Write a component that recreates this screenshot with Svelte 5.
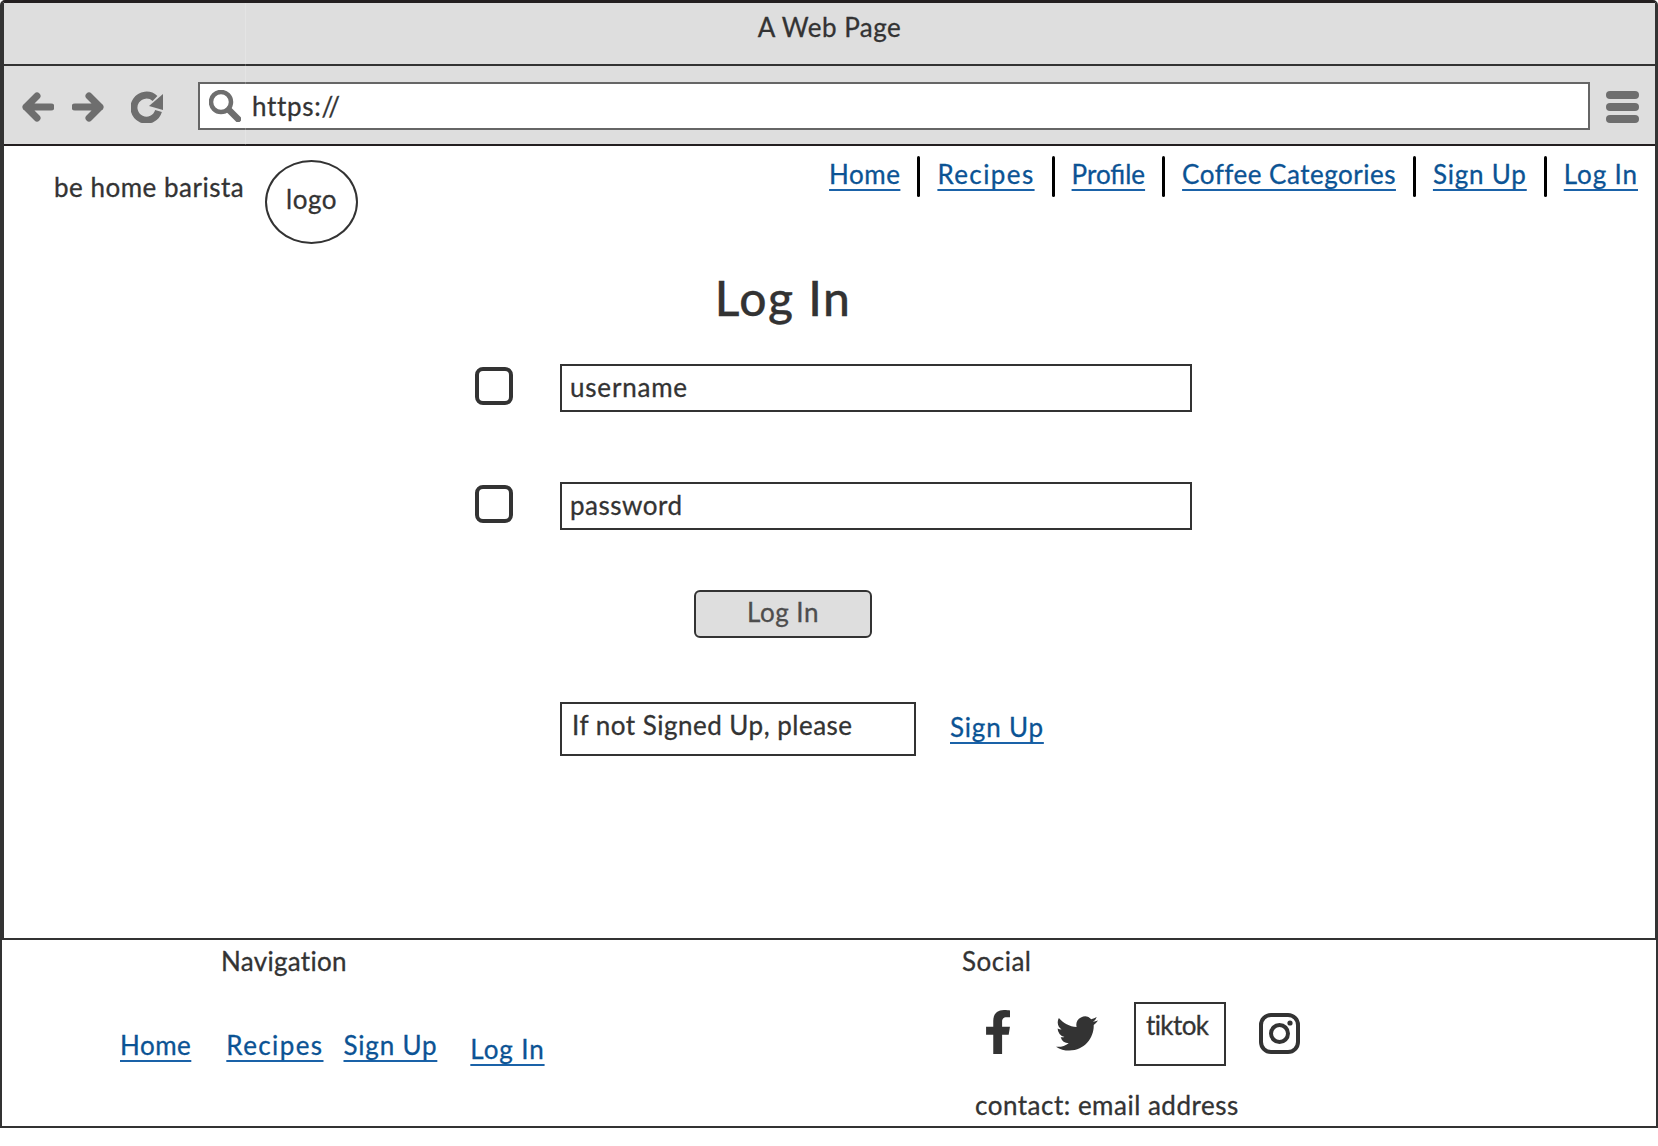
<script>
  const topLinks = [
    { label: 'Home', cls: '' },
    { label: 'Recipes', cls: 'wide' },
    { label: 'Profile', cls: 'tight' },
    { label: 'Coffee Categories', cls: '' },
    { label: 'Sign Up', cls: 'su' },
    { label: 'Log In', cls: 'li' }
  ];
</script>

<div class="page">
  <div class="browser">
    <div class="titlebar">A Web Page</div>
    <div class="toolbar">
      <svg class="tool" viewBox="0 0 32 32" aria-hidden="true"><path d="M29 16H4M15 5 4 16l11 11" /></svg>
      <svg class="tool forward" viewBox="0 0 32 32" aria-hidden="true"><path d="M3 16h25M17 5l11 11-11 11" /></svg>
      <svg class="tool reload" viewBox="0 0 32 32" aria-hidden="true">
        <path d="M24 7.5A12.5 12.5 0 1 0 27.5 20" />
        <polygon class="solid" points="32,3 32,19 18,15" />
      </svg>
      <div class="url">
        <svg class="search" viewBox="0 0 32 32" aria-hidden="true">
          <circle cx="12" cy="12" r="10" />
          <path class="handle" d="M20 20 29 29" />
        </svg>
        <span>https://</span>
      </div>
      <div class="menu"><i></i><i></i><i></i></div>
    </div>

    <div class="content">
      <header>
        <div class="brand">be home barista</div>
        <div class="logo">logo</div>
        <nav>
          {#each topLinks as l, i}
            {#if i > 0}<span class="sep"></span>{/if}
            <a class={l.cls} href="#top">{l.label}</a>
          {/each}
        </nav>
      </header>

      <div class="stage">
        <h1>Log In</h1>
        <div class="row first">
          <span class="check"></span>
          <div class="field user">username</div>
        </div>
        <div class="row second">
          <span class="check"></span>
          <div class="field">password</div>
        </div>
        <button type="button">Log In</button>
        <div class="signup">
          <div class="note">If not Signed Up, please</div>
          <a class="su" href="#top">Sign Up</a>
        </div>
      </div>
    </div>
    <div class="hairline"></div>
  </div>

  <footer>
    <section class="left">
      <div class="fhead nav-head">Navigation</div>
      <div class="flinks">
        <a href="#top">Home</a>
        <a class="recipes wide" href="#top">Recipes</a>
        <a class="signup-link su" href="#top">Sign Up</a>
        <a class="login-link li" href="#top">Log In</a>
      </div>
    </section>
    <section class="right">
      <div class="fhead">Social</div>
      <div class="socials">
        <svg class="fb" viewBox="22 0 272 512" preserveAspectRatio="none" aria-hidden="true">
          <path d="M279.14 288l14.22-92.66h-88.91v-60.13c0-25.35 12.42-50.06 52.24-50.06h40.42V6.26S260.43 0 225.36 0c-73.22 0-121.08 44.38-121.08 124.72v70.62H22.89V288h81.39v224h100.17V288z" />
        </svg>
        <svg class="tw" viewBox="0 2 24 20" preserveAspectRatio="none" aria-hidden="true">
          <path d="M23.953 4.57a10 10 0 01-2.825.775 4.958 4.958 0 002.163-2.723c-.951.555-2.005.959-3.127 1.184a4.92 4.92 0 00-8.384 4.482C7.69 8.095 4.067 6.13 1.64 3.162a4.822 4.822 0 00-.666 2.475c0 1.71.87 3.213 2.188 4.096a4.904 4.904 0 01-2.228-.616v.06a4.923 4.923 0 003.946 4.827 4.996 4.996 0 01-2.212.085 4.936 4.936 0 004.604 3.417 9.867 9.867 0 01-6.102 2.105c-.39 0-.779-.023-1.17-.067a13.995 13.995 0 007.557 2.209c9.053 0 13.998-7.496 13.998-13.985 0-.21 0-.42-.015-.63A9.935 9.935 0 0024 4.59z" />
        </svg>
        <div class="tiktok">tiktok</div>
        <svg class="ig" viewBox="0 0 41 41" aria-hidden="true">
          <rect x="2" y="2" width="37" height="37" rx="10" />
          <circle cx="20.5" cy="20.5" r="8.5" />
          <circle class="dot" cx="31" cy="10" r="2.6" />
        </svg>
      </div>
      <div class="contact">contact: email address</div>
    </section>
  </footer>
</div>

<style>
  :global(body) {
    margin: 0;
    background: #fff;
  }
  .page {
    width: 1658px;
    height: 1146px;
    font-family: Lato, "Open Sans", sans-serif;
    font-size: 26px;
    line-height: 30px;
    letter-spacing: 0.5px;
    -webkit-text-stroke: 0.3px currentColor;
    color: #333;
  }
  a {
    color: #0b5394;
    text-decoration: underline;
    text-decoration-color: #1a62a8;
    text-decoration-thickness: 2px;
    text-underline-offset: 5px;
    white-space: nowrap;
  }
  .wide {
    letter-spacing: 1.4px;
  }
  .tight {
    letter-spacing: 0;
  }
  .su {
    letter-spacing: 0.8px;
  }
  .li {
    letter-spacing: 0.9px;
  }
  .browser {
    position: relative;
    box-sizing: border-box;
    height: 938px;
    border: 3px solid #333;
    border-left-width: 4px;
    border-top-color: #231f20;
    border-bottom: 0;
    border-radius: 5px 5px 0 0;
    background: #fff;
  }
  .hairline {
    position: absolute;
    left: 241px;
    top: 0;
    width: 1px;
    height: 142px;
    background: rgba(255, 255, 255, 0.2);
  }
  .titlebar {
    box-sizing: border-box;
    height: 63px;
    padding-top: 9px;
    background: #dedede;
    border-bottom: 2px solid #333;
    text-align: center;
  }
  .toolbar {
    box-sizing: border-box;
    height: 80px;
    display: flex;
    align-items: flex-start;
    padding: 16px 14px 0 18px;
    background: #dedede;
    border-bottom: 2px solid #231f20;
  }
  .tool {
    width: 32px;
    height: 32px;
    margin-top: 9px;
    flex: none;
    fill: none;
    stroke: #6e6e6e;
    stroke-width: 7;
    stroke-linecap: round;
    stroke-linejoin: round;
  }
  .forward {
    margin-left: 18px;
  }
  .reload {
    margin-left: 27px;
    stroke-linecap: butt;
  }
  .solid {
    fill: #6e6e6e;
    stroke: none;
  }
  .url {
    box-sizing: border-box;
    width: 1392px;
    height: 48px;
    margin-left: 35px;
    display: flex;
    align-items: center;
    background: #fff;
    border: 2px solid #666;
  }
  .search {
    width: 32px;
    height: 32px;
    margin-left: 9px;
    flex: none;
    fill: none;
    stroke: #6e6e6e;
    stroke-width: 4.5;
  }
  .handle {
    stroke-width: 6.5;
    stroke-linecap: round;
  }
  .url span {
    margin-left: 11px;
    letter-spacing: 0.7px;
  }
  .menu {
    margin-left: 16px;
    margin-top: 9px;
    display: flex;
    flex-direction: column;
    gap: 4px;
  }
  .menu i {
    display: block;
    width: 33px;
    height: 8px;
    border-radius: 4px;
    background: #6e6e6e;
  }
  header {
    display: flex;
    align-items: flex-start;
    height: 97px;
    padding: 14px 17px 0 50px;
    box-sizing: border-box;
  }
  .brand {
    margin-top: 12px;
    width: 211px;
    white-space: nowrap;
  }
  .logo {
    box-sizing: border-box;
    width: 93px;
    height: 84px;
    border: 2px solid #333;
    border-radius: 50%;
    display: flex;
    align-items: center;
    justify-content: center;
    padding-bottom: 6px;
  }
  nav {
    margin-left: auto;
    margin-top: -4px;
    display: flex;
    align-items: flex-start;
    gap: 17px;
  }
  nav a {
    margin-top: 3px;
  }
  .sep {
    width: 3px;
    height: 41px;
    border-radius: 2px;
    background: #000;
  }
  .stage {
    margin-left: 471px;
    width: 717px;
  }
  h1 {
    margin: 27px 0 0;
    width: 616px;
    text-align: center;
    font-size: 48px;
    line-height: 56px;
    font-weight: 500;
    letter-spacing: 1.5px;
  }
  .row {
    display: flex;
    align-items: flex-start;
    gap: 47px;
  }
  .first {
    margin-top: 38px;
  }
  .second {
    margin-top: 70px;
  }
  .check {
    box-sizing: border-box;
    flex: none;
    width: 38px;
    height: 38px;
    margin-top: 3px;
    border: 4px solid #333;
    border-radius: 8px;
  }
  .field {
    box-sizing: border-box;
    flex: 1;
    height: 48px;
    padding: 6px 8px;
    border: 2px solid #333;
  }
  .user {
    letter-spacing: 0.8px;
  }
  button {
    display: block;
    box-sizing: border-box;
    width: 178px;
    height: 48px;
    margin: 60px 0 0 219px;
    padding: 0 0 5px;
    background: #dedede;
    border: 2px solid #333;
    border-radius: 6px;
    color: #4d4d4d;
    font: inherit;
    letter-spacing: inherit;
  }
  .signup {
    margin: 64px 0 0 85px;
    display: flex;
    align-items: flex-start;
    gap: 34px;
  }
  .note {
    box-sizing: border-box;
    width: 356px;
    height: 54px;
    padding: 6px 10px;
    border: 2px solid #333;
  }
  .signup a {
    margin-top: 10px;
  }
  footer {
    box-sizing: border-box;
    height: 190px;
    display: flex;
    border: 2px solid #333;
    background: #fff;
  }
  .left {
    width: 960px;
    flex: none;
  }
  .fhead {
    margin-top: 6px;
  }
  .nav-head {
    margin-left: 219px;
    letter-spacing: 0.3px;
  }
  .flinks {
    display: flex;
    align-items: flex-start;
    margin: 54px 0 0 118px;
  }
  .recipes {
    margin-left: 35px;
  }
  .signup-link {
    margin-left: 20px;
  }
  .login-link {
    margin-left: 33px;
    margin-top: 4px;
  }
  .socials {
    display: flex;
    align-items: flex-start;
    height: 64px;
    margin-top: 26px;
  }
  .fb {
    width: 24px;
    height: 44px;
    margin: 8px 0 0 24px;
    fill: #333;
  }
  .tw {
    width: 42px;
    height: 35px;
    margin: 14px 0 0 46px;
    fill: #333;
  }
  .tiktok {
    box-sizing: border-box;
    width: 92px;
    height: 64px;
    margin-left: 36px;
    padding: 6px 10px;
    border: 2px solid #333;
    letter-spacing: -0.6px;
  }
  .ig {
    width: 41px;
    height: 41px;
    margin: 11px 0 0 33px;
    fill: none;
    stroke: #333;
    stroke-width: 4;
  }
  .dot {
    fill: #333;
    stroke: none;
  }
  .contact {
    margin: 24px 0 0 13px;
    white-space: nowrap;
  }
</style>
